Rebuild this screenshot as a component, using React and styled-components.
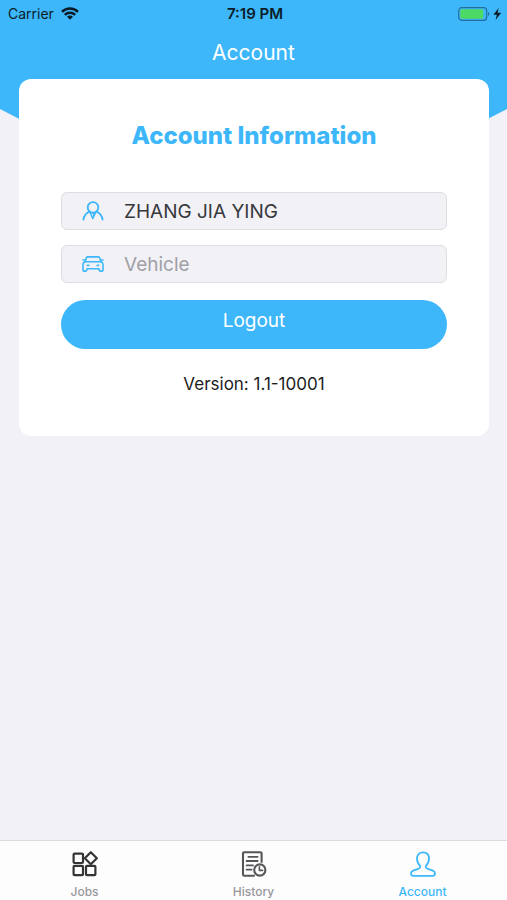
import React, { useState } from 'react'
import styled, { createGlobalStyle } from 'styled-components';

function App() {
    const [name, setName] = useState('ZHANG JIA YING')
    const [vehicle, setVehicle] = useState('')

    return (
        <>
        <GlobalStyle />
        <Screen>
            <Header>
                <StatusBar>
                    <div className='carrier'>Carrier <WifiIcon /></div>
                    <time>7:19 PM</time>
                    <div className='battery'><BatteryIcon /></div>
                </StatusBar>
                <PageTitle>Account</PageTitle>
            </Header>

            <Card>
                <h2>Account Information</h2>
                <Field>
                    <label htmlFor='name' aria-label='Name'><PersonIcon /></label>
                    <input
                    id='name'
                    type='text'
                    value={name}
                    onChange={(e)=>setName(e.target.value)}
                    />
                </Field>
                <Field>
                    <label htmlFor='vehicle' aria-label='Vehicle'><CarIcon /></label>
                    <input
                    id='vehicle'
                    type='text'
                    value={vehicle}
                    placeholder='Vehicle'
                    onChange={(e)=>setVehicle(e.target.value)}
                    />
                </Field>
                <LogoutButton type='button'>Logout</LogoutButton>
                <Version>Version: 1.1-10001</Version>
            </Card>

            <TabBar>
                <Tab href='#jobs'><JobsIcon />Jobs</Tab>
                <Tab href='#history'><HistoryIcon />History</Tab>
                <Tab href='#account' $active aria-current='page'><AccountIcon />Account</Tab>
            </TabBar>
        </Screen>
        </>
    )
}

const WifiIcon = ()=>(
    <svg width='18' height='13' viewBox='0 0 18 13' fill='none' stroke='#0b1c28' strokeWidth='2.5'>
        <path d='M1 4.8C5.5 .5 12.5 .5 17 4.8' />
        <path d='M3.8 7.8C6.8 5 11.2 5 14.2 7.8' />
        <path d='M9 12.7L6 9.7C7.8 8.1 10.2 8.1 12 9.7Z' fill='#0b1c28' stroke='none' />
    </svg>
)

const BatteryIcon = ()=>(
    <svg width='44' height='14' viewBox='0 0 44 14'>
        <rect x='.7' y='.7' width='28' height='12.6' rx='3' fill='none' stroke='#256f9f' strokeWidth='1.2' />
        <rect x='2.3' y='2.3' width='23' height='9.4' rx='1.4' fill='#4cd964' />
        <path d='M30 5C31.8 5.3 31.8 8.7 30 9Z' fill='#256f9f' />
        <path d='M40.6 1L35.4 7.8H38.8L37.6 13L43.2 5.8H39.7Z' fill='#0b1c28' />
    </svg>
)

const PersonIcon = ()=>(
    <svg width='22' height='20' viewBox='0 0 22 20' fill='none' stroke='currentColor' strokeWidth='1.8' strokeLinecap='round' strokeLinejoin='round'>
        <circle cx='11' cy='6.4' r='5.3' />
        <path d='M7.4 10.6C4.2 12 2 14.8 1.4 18.6' />
        <path d='M14.6 10.6C17.8 12 20 14.8 20.6 18.6' />
        <path d='M8 11.3L10.8 17.6L13.8 11.3' strokeWidth='1.4' />
        <path d='M9.8 12.2H12.2L11 16' strokeWidth='1.2' />
    </svg>
)

const CarIcon = ()=>(
    <svg width='22' height='16' viewBox='0 0 22 16' fill='none' stroke='currentColor' strokeWidth='1.6' strokeLinecap='round' strokeLinejoin='round'>
        <path d='M3 5.8L4.4 1.8Q4.8 .9 5.8 .9H16.2Q17.2 .9 17.6 1.8L19 5.8' />
        <path d='M3 5.8H19Q21 6.4 21 8.6V14Q21 15.1 20 15.1H18.4Q17.4 15.1 17.2 14L16.9 12.8H5.1L4.8 14Q4.6 15.1 3.6 15.1H2Q1 15.1 1 14V8.6Q1 6.4 3 5.8Z' />
        <path d='M1 4H2.4M19.6 4H21M5.4 9.4H6.8M15.2 9.4H16.6' />
    </svg>
)

const JobsIcon = ()=>(
    <svg width='26' height='26' viewBox='0 0 26 26' fill='none' stroke='#333436' strokeWidth='2.2' strokeLinejoin='round'>
        <rect x='1.6' y='2.6' width='9.4' height='9.4' rx='1' />
        <rect x='1.6' y='14.8' width='9.4' height='9.4' rx='1' />
        <rect x='14' y='14.8' width='9.4' height='9.4' rx='1' />
        <path d='M18.8 1.2L24.8 7.2L18.8 13.2L12.8 7.2Z' />
    </svg>
)

const HistoryIcon = ()=>(
    <svg width='26' height='26' viewBox='0 0 26 26' fill='none' stroke='#555658' strokeWidth='2.1' strokeLinecap='round' strokeLinejoin='round'>
        <path d='M20.6 11V2.6Q20.6 1.2 19.2 1.2H3.4Q2 1.2 2 2.6V23.4Q2 24.8 3.4 24.8H13' />
        <path d='M7.4 5.8H16.6M5.6 10H16.6M5.6 14.4H12M5.6 18.6H10.6' strokeWidth='1.8' />
        <circle cx='18.8' cy='19' r='5.6' />
        <path d='M18.4 15.8V19.4H21.6' strokeWidth='1.6' />
    </svg>
)

const AccountIcon = ()=>(
    <svg width='26' height='26' viewBox='0 0 26 26' fill='none' stroke='currentColor' strokeWidth='1.8' strokeLinejoin='round'>
        <path d='M10 14.6C7.8 12.6 7 10.4 7 7.8C7 4 9.2 1.4 13 1.4S19 4 19 7.8C19 10.4 18.2 12.6 16 14.6C15.4 16.4 16 17.2 17.8 17.8L22.8 19.6C24.4 20.2 25 21.2 25 22.6Q25 24.8 22.8 24.8H3.2Q1 24.8 1 22.6C1 21.2 1.6 20.2 3.2 19.6L8.2 17.8C10 17.2 10.6 16.4 10 14.6Z' />
    </svg>
)

export default App

const GlobalStyle = createGlobalStyle`
    *{
        box-sizing: border-box;
    }
    body{
        margin: 0;
        background: #f2f1f7;
        font-family: Inter, 'Liberation Sans', sans-serif;
    }
    svg{
        display: block;
        flex: none;
    }
`
const Screen = styled.div`
    display: flex;
    flex-direction: column;
    min-height: 100vh;
`
const Header = styled.header`
    height: 240px;
    background: #3db7f9;
    clip-path: polygon(0 0, 100% 0, 100% 109px, 50% 100%, 0 109px);
`
const StatusBar = styled.div`
    display: grid;
    grid-template-columns: 1fr auto 1fr;
    align-items: center;
    height: 27px;
    padding: 0 5px 0 8px;
    color: #0b1c28;
    font-size: 14px;
    .carrier{
        display: flex;
        align-items: center;
        gap: 7px;
    }
    time{
        font-size: 15px;
        font-weight: 600;
    }
    .battery{
        display: flex;
        justify-content: flex-end;
    }
`
const PageTitle = styled.h1`
    margin: 0;
    color: #fff;
    font-size: 21px;
    font-weight: 400;
    line-height: 52px;
    text-align: center;
`
//relative keeps the card above the clipped header
const Card = styled.main`
    position: relative;
    display: flex;
    flex-direction: column;
    gap: 15px;
    margin: -161px 18px 24px 19px;
    padding: 41px 42px 40px;
    border-radius: 12px;
    background: #fff;
    h2{
        margin: 0 0 25px;
        color: #3db7f9;
        font-size: 24px;
        font-weight: 800;
        line-height: 32px;
        text-align: center;
    }
`
const Field = styled.div`
    display: flex;
    align-items: center;
    height: 38px;
    border: 1px solid #dedee2;
    border-radius: 6px;
    background: #f2f1f6;
    label{
        display: flex;
        justify-content: center;
        width: 62px;
        color: #3db7f9;
    }
    input{
        flex: 1;
        min-width: 0;
        padding: 0;
        border: 0;
        outline: 0;
        background: none;
        color: #38383b;
        font: inherit;
        font-size: 19px;
    }
    input::placeholder{
        color: #a0a0a5;
        opacity: 1;
    }
`
const LogoutButton = styled.button`
    height: 49px;
    margin-top: 2px;
    padding: 0 0 8px;
    border: 0;
    border-radius: 25px;
    background: #3db7f9;
    color: #fff;
    font: inherit;
    font-size: 19px;
    cursor: pointer;
`
const Version = styled.p`
    margin: 8px 0 0;
    color: #1c1c1e;
    font-size: 17px;
    line-height: 24px;
    text-align: center;
`
const TabBar = styled.nav`
    display: flex;
    height: 60px;
    margin-top: auto;
    border-top: 1px solid #dcdce0;
    background: #fdfdfe;
`
const Tab = styled.a`
    flex: 1;
    display: flex;
    flex-direction: column;
    align-items: center;
    gap: 7px;
    padding-top: 10px;
    color: ${({$active})=>($active ? '#3db7f9' : '#98989c')};
    font-size: 12px;
    font-weight: 500;
    line-height: 16px;
    text-decoration: none;
`
